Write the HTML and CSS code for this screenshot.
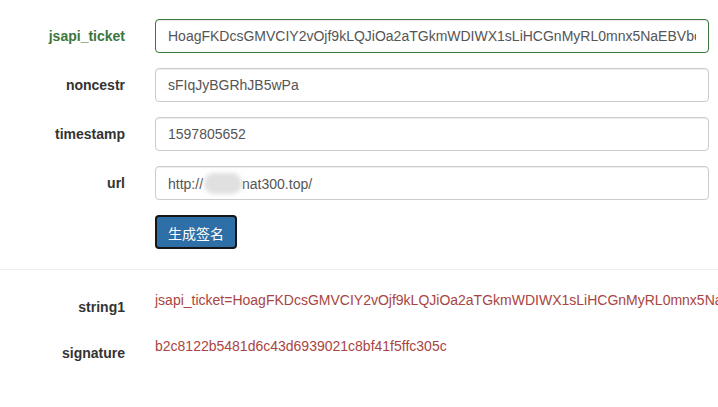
FILE: index.html
```html
<!DOCTYPE html>
<html lang="zh">
<head>
<meta charset="utf-8">
<title>JS-SDK 签名</title>
<link rel="stylesheet" href="styles.css">
</head>
<body>
<form class="form">
  <div class="row has-success">
    <label class="label" for="ticket">jsapi_ticket</label>
    <div class="field"><input class="input" id="ticket" type="text" value="HoagFKDcsGMVCIY2vOjf9kLQJiOa2aTGkmWDIWX1sLiHCGnMyRL0mnx5NaEBVbcxGzqkV7rOJ8bLQ4yS"></div>
  </div>
  <div class="row">
    <label class="label" for="noncestr">noncestr</label>
    <div class="field"><input class="input" id="noncestr" type="text" value="sFIqJyBGRhJB5wPa"></div>
  </div>
  <div class="row">
    <label class="label" for="timestamp">timestamp</label>
    <div class="field"><input class="input" id="timestamp" type="text" value="1597805652"></div>
  </div>
  <div class="row">
    <label class="label" for="url">url</label>
    <div class="field">
      <div class="input url-input">http://<span class="masked"></span>nat300.top/</div>
    </div>
  </div>
  <div class="row row-last">
    <span class="label"></span>
    <div class="field"><button class="btn" type="button">生成签名</button></div>
  </div>
</form>
<hr class="divider">
<div class="results">
  <div class="result">
    <span class="label">string1</span>
    <div class="field field-clip"><p class="value">jsapi_ticket=HoagFKDcsGMVCIY2vOjf9kLQJiOa2aTGkmWDIWX1sLiHCGnMyRL0mnx5NaEBVbcxGzqkV7rOJ8bLQ4yS&amp;noncestr=sFIqJyBGRhJB5wPa&amp;timestamp=1597805652</p></div>
  </div>
  <div class="result">
    <span class="label">signature</span>
    <div class="field"><p class="value">b2c8122b5481d6c43d6939021c8bf41f5ffc305c</p></div>
  </div>
</div>
</body>
</html>
```

FILE: styles.css
```css
html, body {
  margin: 0;
  padding: 0;
  background: #fff;
  overflow: hidden;
}
body {
  font-family: "Liberation Sans", Arial, "Noto Sans CJK SC", sans-serif;
  font-size: 14px;
  line-height: 20px;
  color: #333;
  width: 718px;
  height: 407px;
}
.form {
  margin: 0;
  padding-top: 19px;
}
.row {
  display: flex;
  align-items: flex-start;
  margin-bottom: 15px;
}
.row-last {
  margin-bottom: 0;
}
.label {
  flex: 0 0 140px;
  box-sizing: border-box;
  padding: 7px 15px 0 0;
  text-align: right;
  font-weight: bold;
  color: #333;
  line-height: 20px;
}
.has-success .label {
  color: #3c763d;
}
.field {
  padding-left: 15px;
  min-width: 0;
}
.field-clip {
  flex: 1 1 auto;
  overflow: hidden;
}
.input {
  display: block;
  box-sizing: border-box;
  width: 554px;
  height: 34px;
  padding: 6px 12px;
  margin: 0;
  font-family: "Liberation Sans", Arial, sans-serif;
  font-size: 14px;
  line-height: 20px;
  color: #555;
  background: #fff;
  border: 1px solid #ccc;
  border-radius: 4px;
  box-shadow: inset 0 1px 1px rgba(0, 0, 0, 0.075);
  outline: none;
}
.has-success .input {
  border-color: #3c763d;
}
.url-input {
  white-space: nowrap;
  overflow: hidden;
}
.masked {
  display: inline-block;
  width: 38px;
  height: 21px;
  margin: 0 0 -5px 1px;
  vertical-align: baseline;
  background: #e0e0e0;
  border-radius: 10px;
  filter: blur(2px);
}
.btn {
  display: block;
  box-sizing: border-box;
  width: 82px;
  height: 34px;
  padding: 6px 0;
  font-family: "Noto Sans CJK SC", "Liberation Sans", sans-serif;
  font-size: 14px;
  line-height: 20px;
  color: #fff;
  background: #2f6fa8;
  border: 2px solid #161616;
  border-radius: 4px;
  cursor: pointer;
}
.divider {
  margin: 20px 0;
  height: 0;
  border: 0;
  border-top: 1px solid #eee;
}
.results {
  white-space: nowrap;
}
.result {
  display: flex;
  align-items: flex-start;
  min-height: 31px;
  margin-bottom: 15px;
}
.value {
  margin: 0;
  color: #a94442;
  line-height: 20px;
}
```
